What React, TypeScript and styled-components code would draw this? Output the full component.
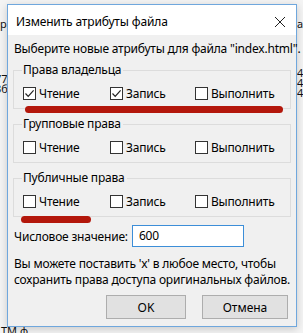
import styled, { createGlobalStyle } from 'styled-components';

type Perm = { label: string; checked: boolean };

type Group = {
  title: string;
  perms: Perm[];
  mark?: { left: number; width: number; bottom: number };
};

const groups: Group[] = [
  {
    title: 'Права владельца',
    perms: [
      { label: 'Чтение', checked: true },
      { label: 'Запись', checked: true },
      { label: 'Выполнить', checked: false },
    ],
    mark: { left: 11, width: 258, bottom: -5 },
  },
  {
    title: 'Групповые права',
    perms: [
      { label: 'Чтение', checked: false },
      { label: 'Запись', checked: false },
      { label: 'Выполнить', checked: false },
    ],
  },
  {
    title: 'Публичные права',
    perms: [
      { label: 'Чтение', checked: false },
      { label: 'Запись', checked: false },
      { label: 'Выполнить', checked: false },
    ],
    mark: { left: 7, width: 70, bottom: -7 },
  },
];

// bits of the window lying behind the dialog
const backBits = [
  { lines: ['ер'], left: -6, top: 19 },
  { lines: ['77', '3б'], left: -5, top: 74 },
  { lines: ['а,'], left: 297, top: 19 },
  { lines: ['4', '4', '4'], left: 297, top: 68 },
  { lines: ['ТМ ф'], left: 1, top: 326 },
];

const CheckIcon = () => (
  <svg width="11" height="11" viewBox="0 0 11 11">
    <path d="M1.5 5.5 L4.2 8.3 L9.6 2.4" fill="none" stroke="#222" strokeWidth="1.2" />
  </svg>
);

const App = () => {
  return (
    <>
      <GlobalStyle />
      <Desktop>
        {backBits.map((b) => (
          <BackText key={b.left + '-' + b.top} style={{ left: b.left, top: b.top }}>
            {b.lines.join('\n')}
          </BackText>
        ))}

        <Dialog>
          <TitleBar>
            <Title>Изменить атрибуты файла</Title>
            <Close>
              <svg width="12" height="12" viewBox="0 0 12 12">
                <path d="M1 1 L11 11 M11 1 L1 11" stroke="#222" strokeWidth="1" />
              </svg>
            </Close>
          </TitleBar>

          <Body>
            <Intro>Выберите новые атрибуты для файла "index.html".</Intro>

            {groups.map((g) => (
              <GroupBox key={g.title}>
                <Legend>{g.title}</Legend>
                <PermRow>
                  {g.perms.map((p) => (
                    <PermItem key={p.label}>
                      <Box>{p.checked && <CheckIcon />}</Box>
                      <span>{p.label}</span>
                    </PermItem>
                  ))}
                </PermRow>
                {g.mark && (
                  <Marker
                    style={{ left: g.mark.left, width: g.mark.width, bottom: g.mark.bottom }}
                  />
                )}
              </GroupBox>
            ))}

            <ValueRow>
              <span>Числовое значение:</span>
              <ValueInput>600</ValueInput>
            </ValueRow>

            <Hint>
              Вы можете поставить 'x' в любое место, чтобы
              <br />
              сохранить права доступа оригинальных файлов.
            </Hint>

            <Buttons>
              <Button $width={80}>OK</Button>
              <Button $width={86}>Отмена</Button>
            </Buttons>
          </Body>
        </Dialog>
      </Desktop>
    </>
  );
};

export default App;

const GlobalStyle = createGlobalStyle`
  body {
    margin: 0;
    font-family: "Noto Sans", "Open Sans", sans-serif;
    font-size: 12px;
    color: #000;
  }
`;

const Desktop = styled.div`
  position: relative;
  width: 303px;
  height: 333px;
  overflow: hidden;
  background: #f4f4f4;
`;

const BackText = styled.span`
  position: absolute;
  font-size: 11px;
  line-height: 10px;
  color: #111;
  white-space: pre;
`;

const Dialog = styled.div`
  position: absolute;
  left: 7px;
  top: 4px;
  width: 288px;
  height: 321px;
  border: 1px solid #6fa7dd;
  background: #f0f0f0;
  display: flex;
  flex-direction: column;
  box-shadow: 0 2px 8px rgba(0, 0, 0, 0.18);
`;

const TitleBar = styled.div`
  height: 30px;
  background: #fff;
  display: flex;
  align-items: center;
  justify-content: space-between;
  padding: 0 8px 0 8px;
  flex-shrink: 0;
`;

const Title = styled.div`
  font-size: 12px;
  letter-spacing: -0.15px;
  margin-top: 3px;
`;

const Close = styled.div`
  width: 14px;
  height: 14px;
  display: flex;
  align-items: center;
  justify-content: center;
  margin-right: 1px;
  margin-top: 3px;
`;

const Body = styled.div`
  flex: 1;
  padding: 6px 5px 0 5px;
  display: flex;
  flex-direction: column;
`;

const Intro = styled.div`
  line-height: 16px;
  padding-left: 1px;
  letter-spacing: -0.2px;
  white-space: nowrap;
`;

const GroupBox = styled.fieldset`
  position: relative;
  margin: 5px 0 0 0;
  padding: 7px 9px 7px 9px;
  border: 1px solid #dcdcdc;
  min-width: 0;
  & + & {
    margin-top: 7px;
  }
`;

const Legend = styled.legend`
  padding: 0 2px 0 1px;
  margin-left: -1px;
  line-height: 16px;
  letter-spacing: -0.2px;
`;

const PermRow = styled.div`
  display: grid;
  grid-template-columns: 87px 85px 1fr;
  height: 16px;
  align-items: center;
`;

const PermItem = styled.div`
  display: flex;
  align-items: center;
  gap: 3px;
  letter-spacing: -0.2px;
`;

const Box = styled.div`
  width: 11px;
  height: 11px;
  border: 1px solid #333;
  background: #fff;
  display: flex;
  align-items: center;
  justify-content: center;
`;

const Marker = styled.div`
  position: absolute;
  height: 7px;
  border-radius: 4px;
  background: #b3170b;
`;

const ValueRow = styled.div`
  display: flex;
  align-items: center;
  gap: 4px;
  margin-top: 8px;
  padding-left: 1px;
  letter-spacing: -0.2px;
`;

const ValueInput = styled.div`
  width: 104px;
  height: 20px;
  border: 1px solid #3c8ed8;
  background: #fff;
  padding-left: 6px;
  line-height: 20px;
`;

const Hint = styled.div`
  margin-top: 9px;
  padding-left: 1px;
  line-height: 16px;
  letter-spacing: -0.2px;
  white-space: nowrap;
`;

const Buttons = styled.div`
  display: flex;
  justify-content: flex-end;
  gap: 16px;
  margin-top: 7px;
  padding-right: 3px;
`;

const Button = styled.div<{ $width: number }>`
  width: ${(p) => p.$width - 2}px;
  height: 22px;
  border: 1px solid #adadad;
  background: #e1e1e1;
  display: flex;
  align-items: center;
  justify-content: center;
`;
